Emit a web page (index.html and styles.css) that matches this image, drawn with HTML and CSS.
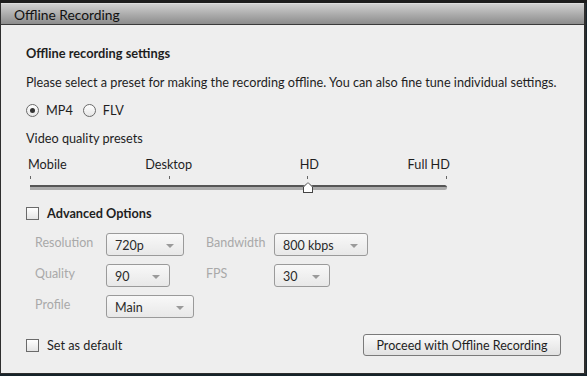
FILE: index.html
```html
<!DOCTYPE html>
<html lang="en">
<head>
    <meta charset="UTF-8">
    <meta name="viewport" content="width=device-width, initial-scale=1.0">
    <title>Offline Recording</title>
    <link rel="stylesheet" href="styles.css">
</head>
<body>

    <div class="backdrop"></div>

    <!-- Dialog -->
    <div class="dialog">
        <div class="titlebar">Offline Recording</div>

        <div class="content">
            <h2 class="heading">Offline recording settings</h2>
            <p class="line desc">Please select a preset for making the recording offline. You can also fine tune individual settings.</p>

            <div class="line radios">
                <label class="radio"><span class="dot checked"></span>MP4</label>
                <label class="radio"><span class="dot"></span>FLV</label>
            </div>

            <p class="line">Video quality presets</p>

            <!-- Preset slider -->
            <div class="slider">
                <div class="marks">
                    <span class="mark first">Mobile</span>
                    <span class="mark">Desktop</span>
                    <span class="mark">HD</span>
                    <span class="mark last">Full HD</span>
                </div>
                <div class="ticks">
                    <span></span><span></span><span></span><span></span>
                </div>
                <div class="track">
                    <span class="thumb"></span>
                </div>
            </div>

            <label class="line check bold"><span class="box"></span>Advanced Options</label>

            <!-- Advanced options (disabled) -->
            <div class="options">
                <span class="opt-label">Resolution</span>
                <div class="select w78">720p</div>
                <span class="opt-label">Bandwidth</span>
                <div class="select w94">800 kbps</div>

                <span class="opt-label">Quality</span>
                <div class="select w64">90</div>
                <span class="opt-label">FPS</span>
                <div class="select w56">30</div>

                <span class="opt-label">Profile</span>
                <div class="select w88">Main</div>
            </div>

            <div class="footer">
                <label class="check"><span class="box"></span>Set as default</label>
                <button class="btn">Proceed with Offline Recording</button>
            </div>
        </div>
    </div>

</body>
</html>
```

FILE: styles.css
```css
* {
    margin: 0;
    padding: 0;
    box-sizing: border-box;
    font-family: Lato, "Open Sans", sans-serif;
}

body {
    width: 587px;
    height: 376px;
    background: #16232a;
    overflow: hidden;
}

.backdrop {
    height: 3px;
    background: #1c1c1c;
}

.dialog {
    width: 586px;
    height: 371px;
    background: #eeeeee;
    border: 1px solid #2e2e2e;
    border-top: none;
    border-right-width: 2px;
}

.titlebar {
    height: 22px;
    padding-left: 13px;
    line-height: 21px;
    font-size: 13.8px;
    color: #111;
    background: linear-gradient(#cfcfcf, #aaaaaa 55%, #8c8c8c);
    border-top: 1px solid #dcdcdc;
    border-bottom: 1px solid #3a3a3a;
}

.content {
    padding: 18px 0 0 25px;
    font-size: 12.7px;
    color: #1e1e1e;
}

.heading {
    height: 20px;
    line-height: 20px;
    font-size: 12.8px;
    font-weight: bold;
}

.line {
    height: 20px;
    line-height: 20px;
    margin-top: 8px;
}

.line.desc {
    margin-top: 9px;
}

.bold {
    font-weight: bold;
}

.radios {
    display: flex;
    gap: 10px;
    margin-top: 8px;
}

.radio {
    display: flex;
    align-items: center;
    gap: 7px;
}

.dot {
    width: 13px;
    height: 13px;
    border-radius: 50%;
    border: 1px solid #6a6a6a;
    background: linear-gradient(#ffffff, #e6e6e6);
    display: flex;
    align-items: center;
    justify-content: center;
}

.dot.checked::after {
    content: "";
    width: 5px;
    height: 5px;
    border-radius: 50%;
    background: #333;
}

/* slider */
.slider {
    position: relative;
    width: 424px;
    margin-top: 6px;
}

.marks {
    display: flex;
    justify-content: space-between;
    width: 416px;
    margin-left: 5px;
    height: 20px;
    line-height: 20px;
}

.mark {
    width: 0;
    display: flex;
    justify-content: center;
    white-space: nowrap;
}

.mark.first {
    justify-content: flex-start;
    margin-left: -3px;
}

.mark.last {
    justify-content: flex-end;
    margin-right: -3px;
}

.ticks {
    display: flex;
    justify-content: space-between;
    width: 417px;
    margin-left: 4px;
    margin-top: 2px;
    height: 3px;
}

.ticks span {
    width: 1px;
    height: 3px;
    background: #666;
}

.track {
    position: relative;
    width: 417px;
    height: 5px;
    margin: 6px 0 0 4px;
    background: #ababab;
    border-top: 2px solid #555;
    border-radius: 0 3px 3px 0;
}

.thumb {
    position: absolute;
    left: 273px;
    top: -5px;
    width: 10px;
    height: 11px;
    background: #fff;
    clip-path: polygon(50% 0, 100% 40%, 100% 100%, 0 100%, 0 40%);
}

.thumb::before {
    content: "";
    position: absolute;
    left: 0;
    top: 0;
    width: 10px;
    height: 11px;
    background: #444;
    clip-path: polygon(50% 0, 100% 40%, 100% 100%, 0 100%, 0 40%, 10% 45%, 10% 90%, 90% 90%, 90% 45%, 50% 10%, 10% 45%, 0 40%);
}

/* checkboxes */
.check {
    display: flex;
    align-items: center;
    gap: 8px;
}

.line.check {
    margin-top: 13px;
}

.box {
    width: 13px;
    height: 13px;
    border: 1px solid #6a6a6a;
    background: linear-gradient(#ffffff, #e4e4e4);
}

/* options grid */
.options {
    display: grid;
    grid-template-columns: 71px 100px 68px auto;
    grid-auto-rows: 22px;
    row-gap: 9px;
    align-items: center;
    margin: 10px 0 0 9px;
}

.opt-label {
    color: #a9a9a9;
    font-size: 12.5px;
    margin-top: -3px;
}

.select {
    position: relative;
    height: 23px;
    line-height: 24px;
    padding-left: 8px;
    border: 1px solid #9a9a9a;
    border-radius: 3px;
    background: linear-gradient(#f8f8f8, #e8e8e8);
    color: #2a2a2a;
    font-size: 12.5px;
}

.select::after {
    content: "";
    position: absolute;
    right: 9px;
    top: 10px;
    border-left: 4px solid transparent;
    border-right: 4px solid transparent;
    border-top: 4px solid #9a9a9a;
}

.w78 { width: 78px; }
.w94 { width: 94px; }
.w64 { width: 64px; }
.w56 { width: 56px; }
.w88 { width: 88px; }

/* footer */
.footer {
    display: flex;
    justify-content: space-between;
    align-items: center;
    width: 535px;
    margin-top: 17px;
}

.btn {
    width: 198px;
    height: 22px;
    border: 1px solid #7a7a7a;
    border-radius: 3px;
    background: linear-gradient(#fafafa, #e2e2e2);
    font-size: 12.5px;
    color: #1e1e1e;
}
```
